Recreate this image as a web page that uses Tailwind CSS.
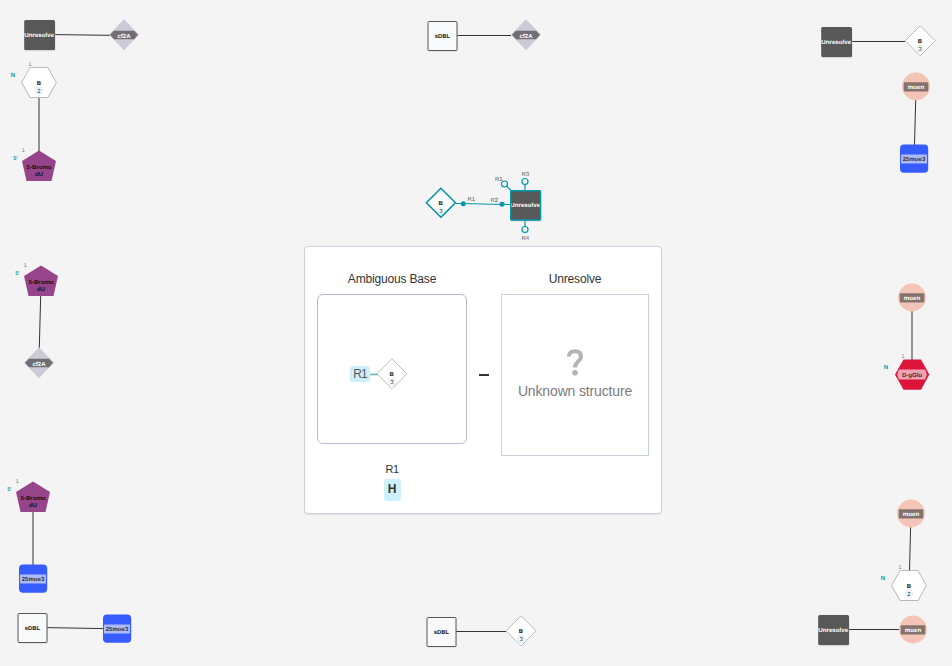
<!DOCTYPE html>
<html lang="en">
<head>
<meta charset="utf-8">
<title>Macromolecule canvas</title>
<script src="https://cdn.jsdelivr.net/npm/@tailwindcss/browser@4"></script>
</head>
<body class="relative h-[666px] w-[952px] overflow-hidden bg-[#f4f4f4] font-['Liberation_Sans',sans-serif] text-[#333]">
<svg class="absolute inset-0" width="952" height="666" viewBox="0 0 952 666" font-family="Liberation Sans, sans-serif" font-size="6" font-weight="bold" text-anchor="middle" text-rendering="geometricPrecision">
  <defs>
    <g id="unresolve">
      <rect x="-15" y="-13.8" width="31" height="30" rx="1.5" fill="#bbb" opacity=".5"/>
      <rect x="-15.3" y="-15" width="30.8" height="30" rx="1.5" fill="#585858"/>
      <text x="-.3" y="2" fill="#fff" textLength="30" lengthAdjust="spacingAndGlyphs">Unresolve</text>
    </g>
    <g id="sdbl">
      <rect x="-14.5" y="-14" width="29.5" height="29.5" rx="1" fill="#bbb" opacity=".5"/>
      <rect x="-14.5" y="-14.5" width="29" height="29" rx="1" fill="#f7f9fa" stroke="#585858"/>
      <text y="2" fill="#222" textLength="15.5" lengthAdjust="spacingAndGlyphs">sDBL</text>
    </g>
    <g id="cf2a">
      <path d="M0-15.5 15 0 0 15.5-15 0Z" fill="#cccad6"/>
      <path d="M-10-4H10L14 0 10 4.5H-10L-14 0Z" fill="#6f6e73"/>
      <text y="3" fill="#fff" textLength="13" lengthAdjust="spacingAndGlyphs">cf2A</text>
    </g>
    <g id="b3">
      <path d="M0-15 15 0 0 15-15 0Z" fill="#fff" stroke="#aaa" stroke-width=".8"/>
      <circle cy="8" r="3.6" fill="#fff" stroke="#bfe8ea" stroke-width=".7"/>
      <text x="-.2" y="2.2" fill="#222">B</text>
      <text y="10" font-size="6" font-weight="normal" fill="#222">3</text>
    </g>
    <g id="b2">
      <path d="M-9-14.5H9L17.5.5 9 15.5H-9L-17.5.5Z" fill="#ddd"/>
      <path d="M-9-15H9L17.3 0 9 15H-9L-17.3 0Z" fill="#fff" stroke="#aaa" stroke-width=".8"/>
      <circle cy="8" r="3.6" fill="#fff" stroke="#bfe8ea" stroke-width=".7"/>
      <text y="2.2" fill="#222">B</text>
      <text y="10" font-size="6" font-weight="normal" fill="#222">2</text>
      <text x="-9" y="-16.4" font-size="5.5" font-weight="normal" fill="#7c7c7f">1</text>
      <text x="-26" y="-5.5" font-size="6" fill="#0097a8">N</text>
    </g>
    <g id="bromo">
      <path d="M0-15.5 17-5 12.5 15H-12.5L-17-5Z" fill="#97458b"/>
      <text y="3.3" fill="#111" textLength="25" lengthAdjust="spacingAndGlyphs">5-Bromo</text>
      <text y="10.3" fill="#111">dU</text>
      <text x="-15.7" y="-14" font-size="5.5" font-weight="normal" fill="#7c7c7f">1</text>
      <text x="-23.7" y="-6" font-size="5.5" fill="#0097a8">5'</text>
    </g>
    <g id="moen">
      <circle r="13.9" fill="#f4c5b7"/>
      <rect x="-12.3" y="-4.3" width="24.6" height="9.3" rx="1" fill="#84736c"/>
      <text y="2.3" fill="#fff" textLength="16.5" lengthAdjust="spacingAndGlyphs">moen</text>
    </g>
    <g id="moe3">
      <rect x="-14" y="-14" width="28.2" height="28.2" rx="4" fill="#365cff"/>
      <rect x="-13" y="-4" width="26" height="9" rx=".5" fill="#adbafa"/>
      <text y="2.5" fill="#333" textLength="22.5" lengthAdjust="spacingAndGlyphs">25moe3</text>
    </g>
    <g id="dgglu">
      <path d="M-8.5-15H9L17.3 0 9 15.3H-8.5L-17 0Z" fill="#dc143c"/>
      <path d="M-13-5H13L15 0 13 5H-13L-15 0Z" fill="#f1a1b1"/>
      <text y="2.5" fill="#333" textLength="20" lengthAdjust="spacingAndGlyphs">D-gGlu</text>
      <text x="-9" y="-16.5" font-size="5.5" font-weight="normal" fill="#7c7c7f">1</text>
      <text x="-26" y="-5.3" font-size="6" fill="#0097a8">N</text>
    </g>
  </defs>

  <g stroke="#333" stroke-width="1">
    <path d="M55 34.6 110 35.3M39 97V151M457 35.5H511M852 41.5H905M915.7 100 914.5 145M40.7 295 39.3 348M33 512V565M47 627.6 103 628.6M456 631.5H506M912 311V360M910.6 527 909.5 571M848 629.5H899"/>
  </g>

  <use href="#unresolve" x="39.5" y="35"/><use href="#cf2a" x="124" y="34.7"/>
  <use href="#b2" x="39" y="82.5"/><use href="#bromo" x="39" y="166"/>
  <use href="#sdbl" x="442.5" y="36"/><use href="#cf2a" x="526" y="34.7"/>
  <use href="#unresolve" x="836.5" y="42"/><use href="#b3" x="920.2" y="40.8"/>
  <use href="#moen" x="916" y="86.5"/><use href="#moe3" x="914" y="158.5"/>
  <use href="#bromo" x="41" y="281"/><use href="#cf2a" x="39" y="362.7"/>
  <use href="#bromo" x="33" y="497"/><use href="#moe3" x="33" y="578.5"/>
  <use href="#sdbl" x="32.5" y="628"/><use href="#moe3" x="117" y="628.5"/>
  <use href="#sdbl" x="441.5" y="632"/><use href="#b3" x="521.1" y="630.8"/>
  <use href="#moen" x="912" y="297.5"/><use href="#dgglu" x="912" y="374.5"/>
  <use href="#moen" x="911" y="513.5"/><use href="#b2" x="909" y="585.5"/>
  <use href="#unresolve" x="833.5" y="630"/><use href="#moen" x="913" y="629.5"/>

  <!-- highlighted pair with attachment points -->
  <g fill="none" stroke="#0097a8" stroke-width="1.2">
    <path d="M456 203.5H463L502 204.5H511M506 185.5 511 190.5M525 184V191M525 220V227"/>
    <g fill="#f7fcfc"><circle cx="504.5" cy="184" r="3"/><circle cx="525" cy="181.5" r="3"/><circle cx="525" cy="229.5" r="3"/></g>
    <g fill="#0097a8" stroke="none"><circle cx="463.3" cy="203.7" r="2.5"/><circle cx="502" cy="204.3" r="2.5"/></g>
  </g>
  <use href="#b3" x="440.9" y="202.8"/>
  <path d="M440.9 188.3 455.4 202.8 440.9 217.3 426.4 202.8Z" fill="none" stroke="#0097a8" stroke-width="1.5"/>
  <use href="#unresolve" x="525.5" y="205.3"/>
  <rect x="510.7" y="190.7" width="29.8" height="29.3" rx="1" fill="none" stroke="#0097a8" stroke-width="1.4"/>
  <g font-weight="normal" fill="#585858" font-size="6">
    <text x="471.3" y="201.2">R1</text><text x="494.3" y="202">R2</text><text x="498.8" y="181.3">R1</text><text x="525.3" y="176.2">R3</text><text x="525.3" y="240.2">R4</text>
  </g>
</svg>

<!-- connection preview -->
<section class="absolute left-[304px] top-[246px] flex h-[268px] w-[358px] rounded border border-[#cad3dd] bg-white px-3 pt-[23px] shadow-[0_1px_1px_rgba(103,104,132,.15)]">
  <div class="flex w-[150px] flex-col items-center">
    <h2 class="flex h-[17px] items-center text-[12px] leading-4 tracking-[-0.17px] whitespace-nowrap">Ambiguous Base</h2>
    <div class="mt-[7px] flex h-[150px] w-[150px] items-center justify-center rounded-md border border-[#b4b9d6] pt-2.5 pr-[27px]">
      <span class="flex h-4 w-5 items-center justify-center rounded-[3px] bg-[#cdf1fc] text-[12px] tracking-[-0.8px] text-[#585858]">R1</span>
      <svg width="37" height="32" viewBox="0 0 37 32" font-family="Liberation Sans, sans-serif" font-size="6" font-weight="bold" text-anchor="middle" text-rendering="geometricPrecision">
        <path d="M0 16.5H8" stroke="#6ba9b4" stroke-width="1.5"/><use href="#b3" x="21.9" y="15.8"/>
      </svg>
    </div>
    <span class="mt-[17px] text-[11px] leading-4 tracking-[-0.5px]">R1</span>
    <span class="mt-0.5 flex h-[22px] w-[17px] items-center justify-center rounded-[3px] bg-[#cdf1fc] pb-0.5 text-[12px] font-bold">H</span>
  </div>
  <div class="flex w-[34px] justify-center pt-[104px]"><span class="h-0.5 w-2.5 bg-[#333]"></span></div>
  <div class="flex w-[148px] flex-col items-center">
    <h2 class="flex h-[17px] items-center text-[12px] leading-4 tracking-[-0.17px]">Unresolve</h2>
    <div class="mt-[7px] flex h-[162px] w-[148px] flex-col items-center border border-[#cad3dd] pt-[53px]">
      <svg width="18" height="29" viewBox="0 0 18 29" fill="none">
        <path d="M2.8 8.6C2.8 5.1 5.2 3.3 9 3.3S15 5.3 15 8.7C15 13 9 13.5 9 19.6" stroke="#b4b4b4" stroke-width="4"/><circle cx="9" cy="24.7" r="2.8" fill="#b4b4b4"/>
      </svg>
      <p class="mt-1 text-[14px] leading-5 tracking-[-0.15px] whitespace-nowrap text-[#7c7c7f]">Unknown structure</p>
    </div>
  </div>
</section>
</body>
</html>
